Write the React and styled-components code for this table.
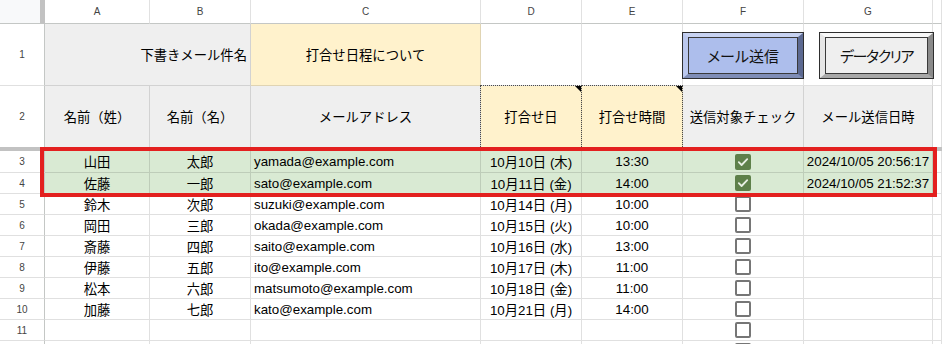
import React from 'react';
import styled, { createGlobalStyle, css } from 'styled-components';

const FONT = `"Liberation Sans", "Noto Sans CJK JP", sans-serif`;
const GRID = 'rgba(0,0,0,0.12)';
const HEAD_LINE = '#c4c7c5';
const BAR = '#c2c2c2';

const GlobalStyle = createGlobalStyle`
  html, body { margin: 0; padding: 0; background: #fff; }
  body { font-family: ${FONT}; }
`;

const Viewport = styled.div`
  position: relative;
  width: 942px;
  height: 344px;
  overflow: hidden;
  background: #fff;
`;

const Sheet = styled.div`
  display: grid;
  grid-template-columns: 45px 105px 101px 230px 101px 101px 121px 129px 1fr;
  grid-template-rows: 24px 62px 61px 4px 22px repeat(9, 21px);
  font-family: ${FONT};
  font-size: 13.33px;
  color: #000;
`;

const Corner = styled.div`
  box-sizing: border-box;
  background: #f8f9fa;
  border-right: 5px solid ${BAR};
  border-bottom: 1px solid ${HEAD_LINE};
`;

const ColHead = styled.div`
  box-sizing: border-box;
  display: flex;
  align-items: center;
  justify-content: center;
  font-size: 10px;
  color: #444;
  background: #fff;
  border-right: 1px solid #e1e1e1;
  border-bottom: 1px solid ${HEAD_LINE};
`;

const RowHead = styled.div`
  box-sizing: border-box;
  display: flex;
  align-items: center;
  justify-content: center;
  font-size: 10px;
  color: #444;
  background: #fff;
  border-right: 1px solid ${HEAD_LINE};
  border-bottom: ${(p) => (p.$noLine ? 'none' : `1px solid ${GRID}`)};
`;

const Cell = styled.div`
  box-sizing: border-box;
  position: relative;
  display: flex;
  align-items: center;
  justify-content: ${(p) => p.$align || 'flex-start'};
  padding: 0 3px;
  white-space: nowrap;
  background: ${(p) => p.$bg || '#fff'};
  border-right: 1px solid ${GRID};
  border-bottom: ${(p) => (p.$noLine ? 'none' : `1px solid ${GRID}`)};
  grid-column: ${(p) => (p.$span ? `span ${p.$span}` : 'auto')};
  ${(p) =>
    p.$note &&
    css`
      &::after {
        content: '';
        position: absolute;
        top: -1px;
        left: -1px;
        right: -1px;
        bottom: 0;
        border: 1px dotted #4a4a4a;
        border-bottom: none;
        pointer-events: none;
      }
      &::before {
        content: '';
        position: absolute;
        top: 0;
        right: 0;
        width: 0;
        height: 0;
        border-top: 6px solid #000;
        border-left: 6px solid transparent;
        z-index: 1;
      }
    `}
`;

const ButtonCell = styled(Cell)`
  align-items: flex-start;
  padding: 8px 0 0 0;
`;

const FrozenBar = styled.div`
  grid-column: 1 / -1;
  background: ${BAR};
`;

const Shape = styled.div`
  box-sizing: border-box;
  flex-shrink: 0;
  display: flex;
  width: ${(p) => p.$w}px;
  height: 47px;
  margin-left: ${(p) => p.$ml}px;
  border: 1px solid #2e2e2e;
  cursor: pointer;
  position: relative;
  z-index: 1;
`;

const Bevel = styled.div`
  flex: 1;
  display: flex;
  border-style: solid;
  border-width: 4px 5px 4px 5px;
  border-color: ${(p) => `${p.$c.top} ${p.$c.right} ${p.$c.bottom} ${p.$c.left}`};
`;

const Face = styled.div`
  flex: 1;
  display: flex;
  align-items: center;
  justify-content: center;
  border: 1px solid #3a3a3a;
  background: ${(p) => p.$c.face};
  font-size: 15px;
  color: #111;
  font-feature-settings: 'palt';
  letter-spacing: ${(p) => p.$spacing || 0}px;
`;

const BLUE = { face: '#adbeec', top: '#c7d2f1', left: '#bbc8ee', right: '#5c6991', bottom: '#7f8db6' };
const GRAY = { face: '#efefef', top: '#f8f8f8', left: '#e6e6e6', right: '#8a8a8a', bottom: '#a8a8a8' };

const BevelButton = ({ label, colors, w, ml, spacing }) => (
  <Shape $w={w} $ml={ml} role="button">
    <Bevel $c={colors}>
      <Face $c={colors} $spacing={spacing}>{label}</Face>
    </Bevel>
  </Shape>
);

const Box = styled.span`
  box-sizing: border-box;
  width: 16px;
  height: 16px;
  border-radius: 2px;
  display: inline-flex;
  align-items: center;
  justify-content: center;
  ${(p) =>
    p.$checked
      ? css`
          background: #5e804a;
        `
      : css`
          border: 2px solid #767676;
          background: #fff;
        `}
`;

const Checkbox = ({ checked }) => (
  <Box $checked={checked}>
    {checked && (
      <svg width="16" height="16" viewBox="0 0 16 16">
        <polyline
          points="3.8,8.2 6.6,11 12.2,5.2"
          fill="none"
          stroke="#e8efe4"
          strokeWidth="1.8"
          strokeLinecap="round"
          strokeLinejoin="round"
        />
      </svg>
    )}
  </Box>
);

const Highlight = styled.div`
  position: absolute;
  left: 40px;
  top: 147px;
  width: 897px;
  height: 50px;
  box-sizing: border-box;
  border: 4px solid #e3201f;
  pointer-events: none;
`;

const HEAD_BG = '#efefef';
const CREAM = '#fff2cc';
const GREEN = '#d9ead3';

const rows = [
  ['山田', '太郎', 'yamada@example.com', '10月10日 (木)', '13:30', true, '2024/10/05 20:56:17'],
  ['佐藤', '一郎', 'sato@example.com', '10月11日 (金)', '14:00', true, '2024/10/05 21:52:37'],
  ['鈴木', '次郎', 'suzuki@example.com', '10月14日 (月)', '10:00', false, ''],
  ['岡田', '三郎', 'okada@example.com', '10月15日 (火)', '10:00', false, ''],
  ['斎藤', '四郎', 'saito@example.com', '10月16日 (水)', '13:00', false, ''],
  ['伊藤', '五郎', 'ito@example.com', '10月17日 (木)', '11:00', false, ''],
  ['松本', '六郎', 'matsumoto@example.com', '10月18日 (金)', '11:00', false, ''],
  ['加藤', '七郎', 'kato@example.com', '10月21日 (月)', '14:00', false, ''],
  ['', '', '', '', '', false, ''],
  ['', '', '', '', '', false, ''],
];

export default function App() {
  return (
    <>
      <GlobalStyle />
      <Viewport>
        <Sheet>
          <Corner />
          {['A', 'B', 'C', 'D', 'E', 'F', 'G', ''].map((l, i) => (
            <ColHead key={i}>{l}</ColHead>
          ))}

          <RowHead>1</RowHead>
          <Cell $span={2} $bg={HEAD_BG} $align="flex-end">下書きメール件名</Cell>
          <Cell $bg={CREAM} $align="center">打合せ日程について</Cell>
          <Cell />
          <Cell />
          <ButtonCell>
            <BevelButton label="メール送信" colors={BLUE} w={122} ml={-1} />
          </ButtonCell>
          <ButtonCell>
            <BevelButton label="データクリア" colors={GRAY} w={115} ml={15} spacing={-1.4} />
          </ButtonCell>
          <Cell />

          <RowHead $noLine>2</RowHead>
          <Cell $noLine $bg={HEAD_BG} $align="center">名前（姓）</Cell>
          <Cell $noLine $bg={HEAD_BG} $align="center">名前（名）</Cell>
          <Cell $noLine $bg={HEAD_BG} $align="center">メールアドレス</Cell>
          <Cell $noLine $bg={CREAM} $align="center" $note>打合せ日</Cell>
          <Cell $noLine $bg={CREAM} $align="center" $note>打合せ時間</Cell>
          <Cell $noLine $bg={HEAD_BG} $align="center">送信対象チェック</Cell>
          <Cell $noLine $bg={HEAD_BG} $align="center">メール送信日時</Cell>
          <Cell $noLine />

          <FrozenBar />

          {rows.map((r, i) => {
            const bg = i < 2 ? GREEN : '#fff';
            const n = i + 3;
            return (
              <React.Fragment key={i}>
                <RowHead>{n <= 11 ? n : ''}</RowHead>
                <Cell $bg={bg} $align="center">{r[0]}</Cell>
                <Cell $bg={bg} $align="center">{r[1]}</Cell>
                <Cell $bg={bg}>{r[2]}</Cell>
                <Cell $bg={bg} $align="center">{r[3]}</Cell>
                <Cell $bg={bg} $align="center">{r[4]}</Cell>
                <Cell $bg={bg} $align="center">
                  <Checkbox checked={r[5]} />
                </Cell>
                <Cell $bg={bg} $align="center">{r[6]}</Cell>
                <Cell />
              </React.Fragment>
            );
          })}
        </Sheet>
        <Highlight />
      </Viewport>
    </>
  );
}
